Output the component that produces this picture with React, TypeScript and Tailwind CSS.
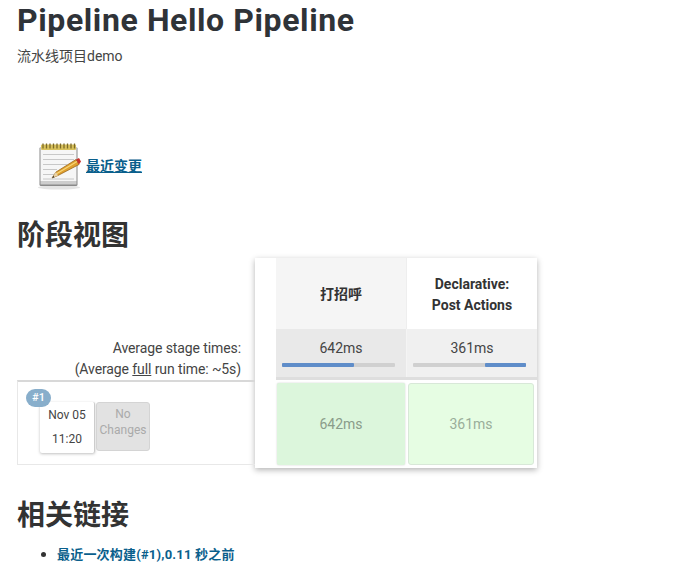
const font = "font-['Roboto','Noto_Sans_CJK_SC',sans-serif]";

function NotepadIcon() {
  return (
    <svg width="46" height="48" viewBox="0 0 46 48" className="shrink-0">
      <ellipse cx="22" cy="45.5" rx="21" ry="2" fill="#e4e4e4" />
      <rect x="2.5" y="5" width="38" height="39" rx="1.5" fill="#8a8a8a" />
      <rect x="3.5" y="5" width="36" height="34" fill="#f6f6f6" />
      <path d="M3.5 39h36v3.5h-36z" fill="#cdcdcd" />
      <rect x="4" y="2.5" width="35" height="5.5" rx="1" fill="#d9c25c" />
      <path d="M6 1.500v5M9.500 1.500v5M13 1.500v5M16.500 1.500v5M20 1.500v5M23.500 1.500v5M27 1.500v5M30.500 1.500v5M34 1.500v5M37.500 1.500v5" stroke="#7c6a28" strokeWidth="1.300" />
      <path d="M6 12.500h31M6 17.500h31M6 22.500h24M6 27.500h14M6 32.500h11M6 37h31" stroke="#bdbdbd" strokeWidth="0.800" />
      <path d="M15 36l4-6L39 17.500l3 5-21 11z" fill="#e0a02e" stroke="#8f5c14" strokeWidth="0.700" />
      <path d="M20 31.500l20-12" stroke="#f7d77a" strokeWidth="1.200" />
      <path d="M39 17.500l3-1.500 2 3.500-2 3z" fill="#c8322b" />
      <path d="M15 36l4-6 2 3.500z" fill="#e9d3a8" />
      <path d="M15 36l1.500-2.200 1 1.500z" fill="#333" />
    </svg>
  );
}

function AvgCell({ time, from, width, className }: { time: string; from: string; width: string; className: string }) {
  return (
    <div className={`flex flex-1 flex-col items-center ${className}`}>
      <div className="mt-[8px] text-[14px] leading-[22px] text-[#444]">{time}</div>
      <div className={`mr-[6px] mt-[4px] flex h-[4px] w-[113px] rounded-[1px] bg-[#d0d0d0] ${from}`}>
        <div className={`h-full rounded-[1px] bg-[#5f8dc9] ${width}`} />
      </div>
    </div>
  );
}

export default function App() {
  return (
    <div className={`h-[574px] w-[686px] overflow-hidden bg-white pl-[17px] text-[#333] ${font}`}>
      <h1 className="text-[32px] font-bold leading-[40px] tracking-[0.6px] text-[#2f3338]">Pipeline Hello Pipeline</h1>
      <div className="mt-[6px] text-[14px] leading-[20px] text-[#444]">流水线项目demo</div>

      <div className="ml-[20px] mt-[76px] flex items-center gap-[3px]">
        <NotepadIcon />
        <a className="text-[14px] font-bold leading-[20px] text-[#0a5f8c] underline">最近变更</a>
      </div>

      <h2 className="mt-[26px] text-[28px] font-bold leading-[40px] text-[#333]">阶段视图</h2>

      <div className="mt-[2px] flex">
        <div className="flex w-[238px] flex-col">
          <div className="flex h-[122px] flex-col justify-end pr-[14px] text-right text-[14px] leading-[21px] tracking-[-0.1px] text-[#444]">
            <div>Average stage times:</div>
            <div>
              (Average <span className="underline">full</span> run time: ~5s)
            </div>
          </div>
          <div className="relative flex h-[85px] border-b border-l border-t-2 border-[#e8e8e8] border-t-[#d8d8d8] pl-[22px] pt-[20px]">
            <div className="absolute left-[8px] top-[7px] z-10 flex h-[18px] w-[25px] items-center justify-center rounded-[9px] bg-[#88aecb] text-[11px] font-medium text-white">
              #1
            </div>
            <div className="flex h-[51px] w-[55px] flex-col items-center rounded-[2px] border-r border-[#ccc] bg-white pt-px text-[12px] leading-[24px] text-[#444] shadow-[0_1px_3px_rgba(0,0,0,0.25)]">
              <div>Nov 05</div>
              <div>11:20</div>
            </div>
            <div className="ml-px flex h-[49px] w-[54px] flex-col items-center rounded-[3px] border border-[#d4d4d4] bg-[#e2e2e2] pt-[3px] text-[12px] leading-[16px] text-[#aaa]">
              <div>No</div>
              <div>Changes</div>
            </div>
          </div>
        </div>

        <div className="flex w-[282px] flex-col bg-white pl-[21px] shadow-[0_2px_6px_rgba(0,0,0,0.3)]">
          <div className="flex h-[71px] pt-[2px] text-[14px] font-bold leading-[21px] text-[#333]">
            <div className="-mt-[2px] flex flex-1 items-center justify-center border-r border-[#eee] bg-[#f5f5f5] pt-[2px]">打招呼</div>
            <div className="flex flex-1 items-center justify-center text-center">
              Declarative:
              <br />
              Post Actions
            </div>
          </div>
          <div className="flex h-[51px] border-b-[3px] border-[#dedede]">
            <AvgCell time="642ms" from="justify-start" width="w-[72px]" className="border-r border-[#f4f4f4] bg-[#e9e9e9]" />
            <AvgCell time="361ms" from="justify-end" width="w-[41px]" className="bg-[#f0f0f0]" />
          </div>
          <div className="flex h-[88px] gap-[3px] pb-[3px] pl-px pr-[3px] pt-[3px] text-[14px]">
            <div className="flex w-[128px] items-center justify-center rounded-[2px] bg-[#dcf6dc] text-[#8a9c8a] shadow-[0_0_2px_rgba(0,0,0,0.2)]">642ms</div>
            <div className="flex flex-1 items-center justify-center rounded-[3px] border border-[#d8e8d8] bg-[#e6fde3] text-[#9aae9a]">361ms</div>
          </div>
        </div>
      </div>

      <h2 className="mt-[28px] text-[28px] font-bold leading-[40px] text-[#333]">相关链接</h2>
      <ul className="ml-[40px] mt-[8px] list-disc text-[13px] font-bold leading-[20px] tracking-[0.2px] text-[#0a5f8c] marker:text-[15px] marker:text-[#333]">
        <li>最近一次构建(#1),0.11 秒之前</li>
      </ul>
    </div>
  );
}
